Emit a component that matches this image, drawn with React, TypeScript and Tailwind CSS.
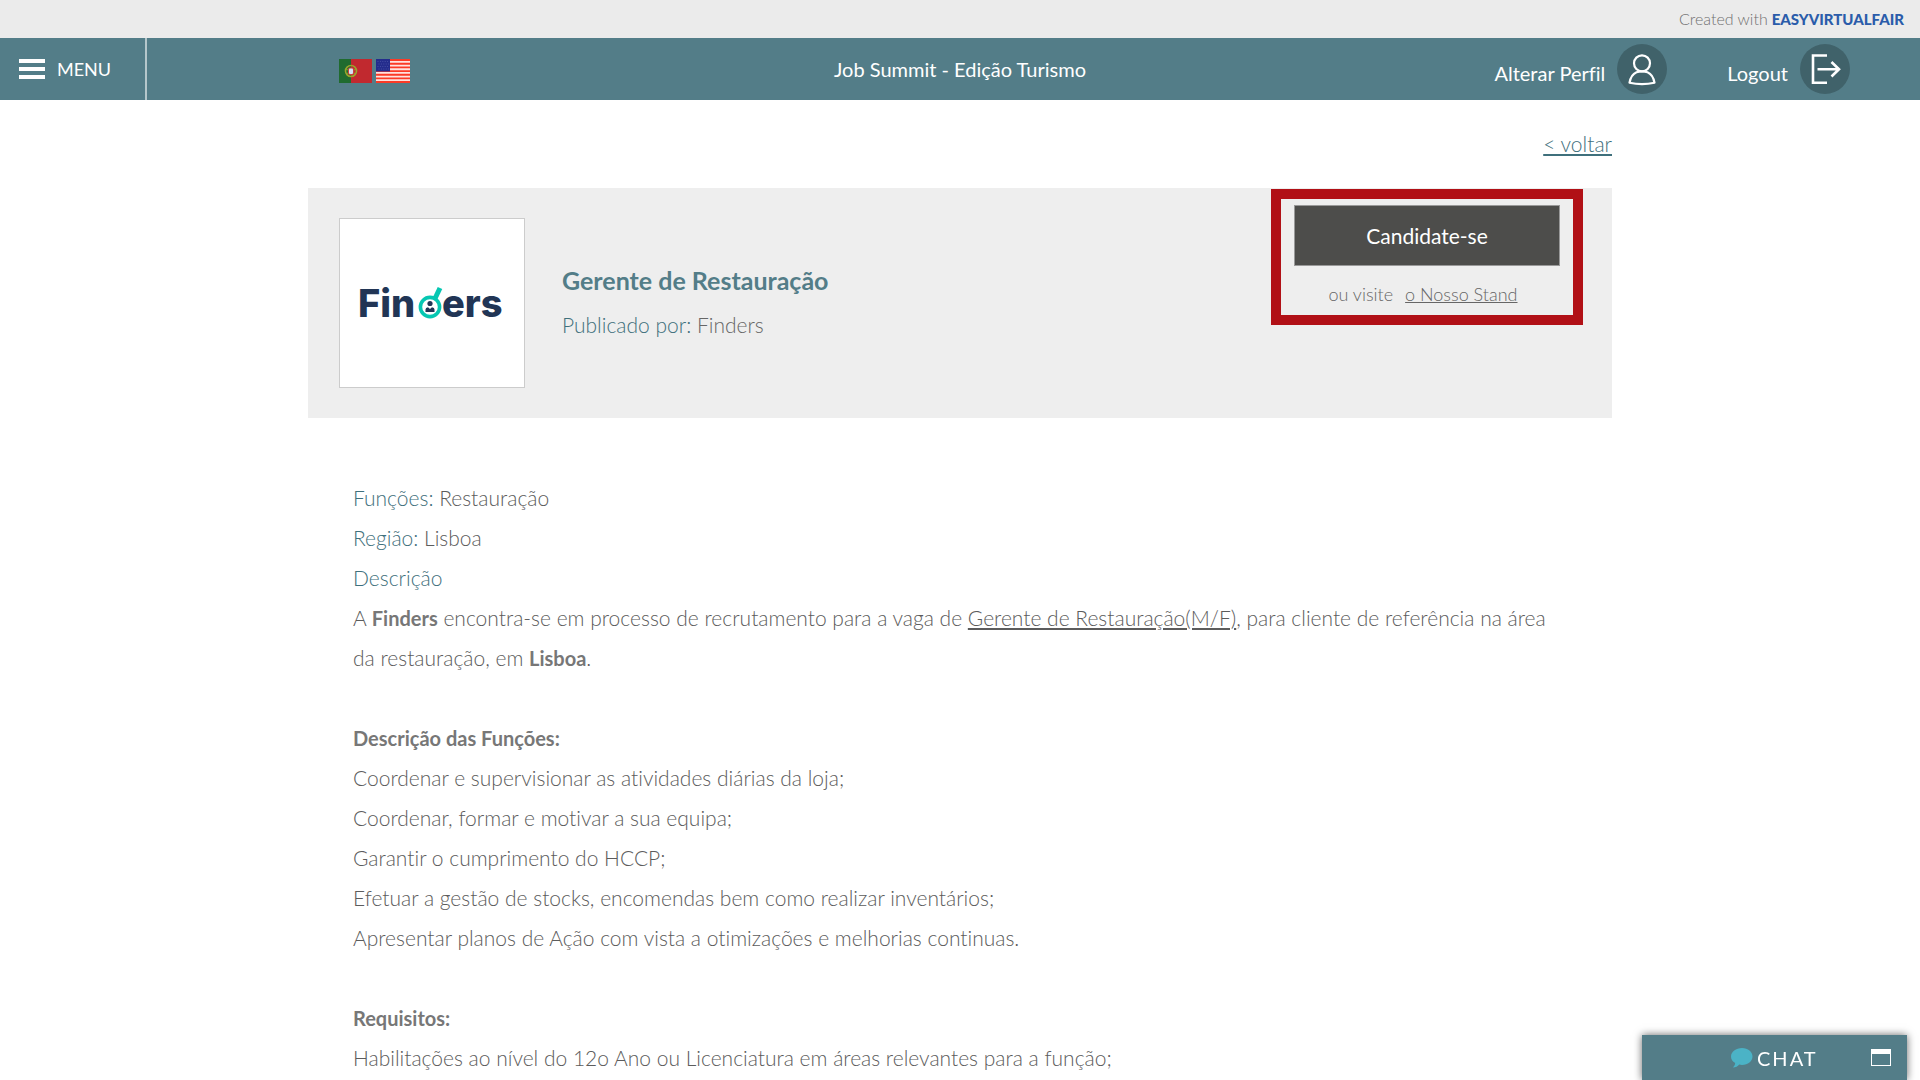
import React from "react";

const duties = [
    "Coordenar e supervisionar as atividades diárias da loja;",
    "Coordenar, formar e motivar a sua equipa;",
    "Garantir o cumprimento do HCCP;",
    "Efetuar a gestão de stocks, encomendas bem como realizar inventários;",
    "Apresentar planos de Ação com vista a otimizações e melhorias continuas.",
];

const requirements = [
    "Habilitações ao nível do 12o Ano ou Licenciatura em áreas relevantes para a função;",
];

const FlagPT = () => (
    <svg width="33" height="24" viewBox="0 0 33 24" aria-hidden="true">
        <rect width="33" height="24" fill="#c1292f" />
        <rect width="12" height="24" fill="#1f6b2f" />
        <circle cx="12" cy="12" r="5.5" fill="none" stroke="#9aa52c" strokeWidth="1.6" />
        <path d="M7 10 L17 15 M7 15 L17 10" stroke="#9aa52c" strokeWidth="0.8" />
        <rect x="9" y="8.5" width="6" height="7.5" rx="2" fill="#c9403f" />
        <rect x="10" y="9.5" width="4" height="5.5" rx="1" fill="#d5e3f5" />
    </svg>
);

const FlagUS = () => (
    <svg width="34" height="24" viewBox="0 0 34 24" aria-hidden="true">
        <rect width="34" height="24" fill="#ffe3df" />
        <path
            d="M0 1H34M0 4.7H34M0 8.4H34M0 12.1H34M0 15.8H34M0 19.4H34M0 23H34"
            stroke="#fb3b26"
            strokeWidth="1.9"
        />
        <rect width="14" height="12.5" fill="#242c8c" />
        <path
            d="M1.5 2.5H13M2.5 5H13M1.5 7.5H13M2.5 10H13"
            stroke="#4c55aa"
            strokeWidth="0.8"
            strokeDasharray="1 1.4"
        />
    </svg>
);

const FindersLogo = () => (
    <svg
        width="148"
        height="60"
        viewBox="0 0 148 60"
        role="img"
        aria-label="Finders"
        className="font-['Inter',sans-serif] text-[38px] font-extrabold"
    >
        <text x="0" y="44" fill="#213555">Fin</text>
        <text x="84" y="44" fill="#213555">ers</text>
        <path d="M77 25.5 L82 15" stroke="#06c7b2" strokeWidth="5" />
        <circle cx="72" cy="34" r="9.6" fill="#fff" stroke="#06c7b2" strokeWidth="3.6" />
        <circle cx="72" cy="30.5" r="2.6" fill="#213555" />
        <path d="M67.5 39v-2.5q0-2 2.5-2.3l2 1.8 2-1.8q2.5.3 2.5 2.3v2.5z" fill="#213555" />
    </svg>
);

const UserIcon = () => (
    <svg width="50" height="50" viewBox="0 0 50 50" fill="none" stroke="#fff" strokeWidth="2.2" aria-hidden="true">
        <circle cx="25" cy="25" r="25" fill="#40626a" stroke="none" />
        <circle cx="25" cy="19.3" r="8" />
        <path
            d="M19.5 28.2Q14 30.5 12.5 38.7Q25 41.5 37.5 38.7Q36 30.5 30.5 28.2Q25 26.5 19.5 28.2Z"
            strokeLinejoin="round"
        />
    </svg>
);

const LogoutIcon = () => (
    <svg width="50" height="50" viewBox="0 0 50 50" fill="none" stroke="#fff" strokeWidth="2.6" aria-hidden="true">
        <circle cx="25" cy="25" r="25" fill="#40626a" stroke="none" />
        <path d="M27 11.5H13V38.7H27" />
        <path d="M17.5 25.3H39M31.5 18L39 25.3L31.5 32.5" />
    </svg>
);

const Header = () => {
    return (
        <header>
            <div className="flex h-[38px] items-center justify-end gap-1 bg-[#ebebeb] pr-4 text-base text-[#707070]">
                <span className="font-light">Created with</span>
                <a href="#" className="text-[15px] font-black text-[#2a5caa]">EASYVIRTUALFAIR</a>
            </div>
            <nav className="grid h-[62px] grid-cols-3 items-center bg-[#537d88] text-xl text-white">
                <div className="flex h-full items-center">
                    <button className="flex h-full w-[147px] items-center gap-3 border-r-2 border-[#b5c7cb] pl-[19px] text-lg">
                        <svg width="26" height="20" viewBox="0 0 26 20" fill="#fff" aria-hidden="true">
                            <path d="M0 0H26V4H0ZM0 8H26V12H0ZM0 16H26V20H0Z" />
                        </svg>
                        MENU
                    </button>
                    <div className="ml-48 flex gap-1 pt-5 pb-4">
                        <button aria-label="Português"><FlagPT /></button>
                        <button aria-label="English"><FlagUS /></button>
                    </div>
                </div>
                <h1 className="text-center">Job Summit - Edição Turismo</h1>
                <div className="flex items-center justify-end gap-[60px] pr-[70px]">
                    <a href="#" className="flex items-center gap-3">
                        <span className="pt-2">Alterar Perfil</span>
                        <UserIcon />
                    </a>
                    <a href="#" className="flex items-center gap-3">
                        <span className="pt-2">Logout</span>
                        <LogoutIcon />
                    </a>
                </div>
            </nav>
        </header>
    );
};

const JobBanner = () => {
    return (
        <section className="flex min-h-[230px] items-start bg-[#eee] pr-[29px] pl-[31px]">
            <div className="mt-[30px] flex h-[170px] w-[186px] items-center justify-center border border-[#ccc] bg-white">
                <FindersLogo />
            </div>
            <div className="mt-[75px] ml-[37px] flex-1">
                <h2 className="text-[25px] leading-[34px] font-bold text-[#537d88]">Gerente de Restauração</h2>
                <p className="mt-2 leading-10 font-light text-[#666]">
                    <span className="text-[#3f707c]">Publicado por:</span> Finders
                </p>
            </div>
            {/* Highlighted call to action */}
            <div className="mt-px h-[136px] w-[312px] border-[10px] border-[#b11016] px-[13px] pt-[6px]">
                <button className="h-[61px] w-full border border-[#999] bg-[#4d4d4b] text-white">
                    Candidate-se
                </button>
                <p className="mt-4 flex justify-center gap-3 pr-2 text-lg leading-6 font-light text-[#666]">
                    ou visite
                    <a href="#" className="underline">o Nosso Stand</a>
                </p>
            </div>
        </section>
    );
};

const JobDetails = () => {
    return (
        <section className="pt-[60px] pr-[60px] pl-[45px] leading-10 font-light text-[#5c5c5c]">
            <p><span className="text-[#3f707c]">Funções:</span> Restauração</p>
            <p><span className="text-[#3f707c]">Região:</span> Lisboa</p>
            <p className="text-[#3f707c]">Descrição</p>
            <p>
                A <b className="text-xl leading-10 font-bold text-[#777]">Finders</b> encontra-se em processo de
                recrutamento para a vaga de <u>Gerente de Restauração(M/F)</u>, para cliente de referência na área da
                restauração, em <b className="text-xl leading-10 font-bold text-[#777]">Lisboa</b>.
            </p>
            <h3 className="mt-10 text-xl leading-10 font-bold text-[#777]">Descrição das Funções:</h3>
            {duties.map((item) => (
                <p key={item}>{item}</p>
            ))}
            <h3 className="mt-10 text-xl leading-10 font-bold text-[#777]">Requisitos:</h3>
            {requirements.map((item) => (
                <p key={item}>{item}</p>
            ))}
        </section>
    );
};

const ChatBar = () => {
    return (
        <button className="fixed right-[13px] bottom-0 flex h-[45px] w-[265px] items-center bg-[#537d88] pr-4 pl-[89px] text-xl text-white shadow-[0_0_8px_rgba(0,0,0,0.6)]">
            <svg width="22" height="20" viewBox="0 0 22 20" fill="#4bb3c6" aria-hidden="true">
                <path d="M11 0C17 0 21.5 3.7 21.5 8.5S17 17 11 17Q9.5 17 8.2 16.6Q6 19.5 2 19.5Q4.3 17.5 4.2 15Q0 12.5 0 8.5C0 3.7 5 0 11 0Z" />
            </svg>
            <span className="ml-1 flex-1 text-left tracking-widest">CHAT</span>
            <svg width="20" height="17" viewBox="0 0 20 17" aria-hidden="true">
                <rect x="0.5" y="0.5" width="19" height="16" fill="none" stroke="#fff" />
                <rect width="20" height="5" fill="#fff" />
            </svg>
        </button>
    );
};

const App = () => {
    return (
        <div className="bg-white font-['Lato',sans-serif] [font-variant-ligatures:none]">
            <Header />
            <main className="mx-auto w-full max-w-[1304px] text-[21px]">
                <div className="flex h-[88px] items-center justify-end">
                    <a href="#" className="font-light text-[#3f707c] underline">&lt; voltar</a>
                </div>
                <JobBanner />
                <JobDetails />
            </main>
            <ChatBar />
        </div>
    );
};

export default App;
